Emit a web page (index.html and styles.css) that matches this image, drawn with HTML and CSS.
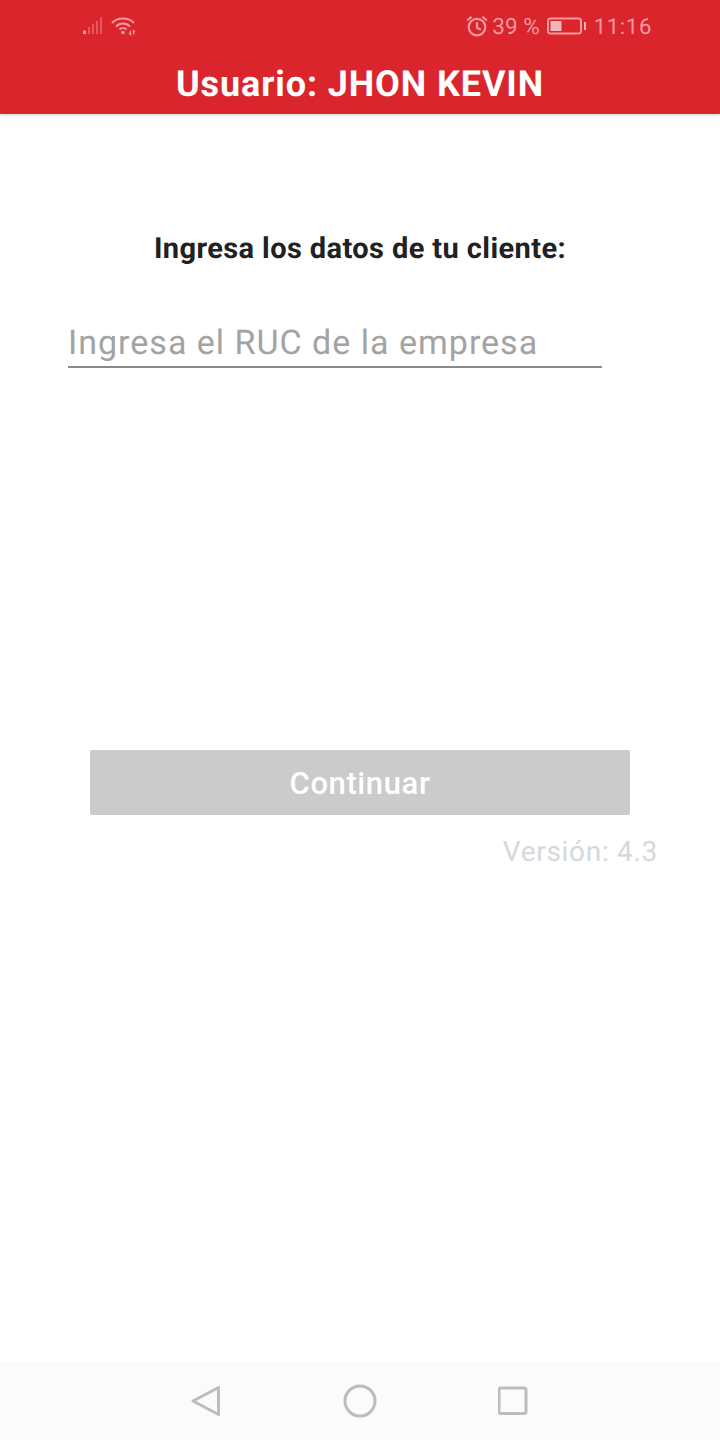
FILE: index.html
```html
<!DOCTYPE html>
<html lang="en">
<head>
    <meta charset="UTF-8">
    <meta name="viewport" content="width=device-width, initial-scale=1.0">
    <title>Usuario</title>
    <link rel="stylesheet" href="styles.css">
</head>
<body>
    <div class="app">
        <header class="topbar">
            <div class="status">
                <div class="status-left">
                    <svg width="22" height="20" viewBox="0 0 22 20" class="icon-signal">
                        <rect x="1" y="14.5" width="3" height="3.5" class="dot"/>
                        <rect x="6" y="11" width="2" height="7"/>
                        <rect x="10" y="8" width="2" height="10"/>
                        <rect x="14" y="5" width="2" height="13"/>
                        <rect x="18" y="1.5" width="2" height="16.5"/>
                    </svg>
                    <svg width="26" height="20" viewBox="0 0 26 20" class="icon-wifi">
                        <path d="M1 7 C6.5 1 17.5 1 23 7" />
                        <path d="M5 10.5 C9 6.5 15 6.5 19 10.5" />
                        <path d="M8.5 13.5 C10.5 11.5 13.5 11.5 15.5 13.5" />
                        <circle cx="12" cy="16.5" r="1.8" class="fill"/>
                        <path d="M19.5 14.5v4l-1.5-1.5M22.5 18.5v-4l1.5 1.5" class="thin"/>
                    </svg>
                </div>
                <div class="status-right">
                    <svg width="24" height="24" viewBox="0 0 22 22" class="icon-alarm">
                        <circle cx="11" cy="12" r="7.6"/>
                        <path d="M11 7.5V12.5L14.5 14.5"/>
                        <path d="M2 6L6 2.5M20 6L16 2.5"/>
                    </svg>
                    <span class="status-text pct">39 %</span>
                    <svg width="40" height="18" viewBox="0 0 40 18" class="icon-battery">
                        <rect x="1" y="1.5" width="33" height="15" rx="2.5"/>
                        <rect x="3.5" y="4" width="11" height="10" class="fill"/>
                        <rect x="37" y="5" width="2" height="8" class="fill"/>
                    </svg>
                    <span class="status-text clock">11:16</span>
                </div>
            </div>
            <h1 class="title">Usuario: JHON KEVIN</h1>
        </header>

        <main class="content">
            <h2 class="prompt">Ingresa los datos de tu cliente:</h2>
            <div class="field">
                <span class="placeholder">Ingresa el RUC de la empresa</span>
            </div>
            <button class="continue">Continuar</button>
            <p class="version">Versión: 4.3</p>
        </main>

        <nav class="navbar">
            <svg width="32" height="32" viewBox="0 0 32 32" class="nav-icon">
                <path d="M28.5 2.5V29.5L3 16Z"/>
            </svg>
            <svg width="34" height="34" viewBox="0 0 34 34" class="nav-icon">
                <circle cx="17" cy="17" r="15"/>
            </svg>
            <svg width="32" height="32" viewBox="0 0 32 32" class="nav-icon">
                <rect x="1" y="3" width="27" height="25.5" rx="2"/>
            </svg>
        </nav>
    </div>
</body>
</html>
```

FILE: styles.css
```css
* {
    box-sizing: border-box;
}
body {
    margin: 0;
    font-family: Roboto, "Liberation Sans", sans-serif;
    background-color: #fff;
    text-rendering: geometricPrecision;
}
.app {
    height: 1440px;
    display: flex;
    flex-direction: column;
    overflow: hidden;
}
.topbar {
    height: 114px;
    background-color: #da252d;
    box-shadow: 0 1px 3px rgba(0, 0, 0, 0.2);
    flex-shrink: 0;
}
.status {
    height: 52px;
    padding: 0 68px 0 82px;
    display: flex;
    justify-content: space-between;
    align-items: center;
}
.status-left, .status-right {
    display: flex;
    align-items: center;
}
.status-left {
    gap: 7px;
}
.status-text {
    padding-top: 2px;
    color: #f09a9d;
    font-size: 22.5px;
}
.pct {
    margin-left: 3px;
}
.icon-battery {
    margin-left: 7px;
}
.clock {
    margin-left: 7px;
    font-size: 22px;
    letter-spacing: 0.7px;
}
.icon-signal rect {
    fill: #e9585e;
}
.icon-signal rect.dot {
    fill: #f09a9d;
}
.icon-wifi path, .icon-alarm path, .icon-alarm circle, .icon-battery rect {
    fill: none;
    stroke: #f09a9d;
    stroke-width: 2;
}
.icon-wifi path.thin {
    stroke-width: 1.3;
}
.icon-wifi .fill {
    fill: #f09a9d;
}
.icon-battery rect.fill {
    fill: #f5b5b8;
    stroke: none;
}
.title {
    margin: 0;
    color: #fff;
    font-size: 36px;
    font-weight: 700;
    letter-spacing: 0.9px;
    line-height: 64px;
    text-align: center;
}
.content {
    flex: 1;
    padding-top: 118px;
}
.prompt {
    margin: 0;
    font-size: 29px;
    font-weight: 700;
    letter-spacing: 0.4px;
    line-height: 34px;
    color: #212121;
    text-align: center;
}
.field {
    width: 534px;
    height: 58px;
    margin: 44px 0 0 68px;
    border-bottom: 2px solid #8a8a8a;
    padding-top: 8px;
}
.placeholder {
    display: block;
    font-size: 34px;
    letter-spacing: 1px;
    line-height: 50px;
    color: #a3a3a3;
}
.continue {
    display: block;
    width: 540px;
    height: 65px;
    padding-top: 3px;
    margin: 382px auto 0;
    border: none;
    border-radius: 2px;
    background-color: #cbcbcb;
    color: #fff;
    font-family: inherit;
    font-size: 31px;
    font-weight: 500;
    letter-spacing: 0.6px;
}
.version {
    margin: 17px 62px 0 0;
    font-size: 28px;
    letter-spacing: 0.7px;
    line-height: 40px;
    color: #d5d8dc;
    text-align: right;
}
.navbar {
    height: 78px;
    flex-shrink: 0;
    background-color: #fbfbfb;
    display: flex;
    justify-content: center;
    align-items: center;
    gap: 121px;
}
.nav-icon path, .nav-icon circle, .nav-icon rect {
    fill: none;
    stroke: #bdbdbd;
    stroke-width: 3;
    stroke-linejoin: round;
}
```
